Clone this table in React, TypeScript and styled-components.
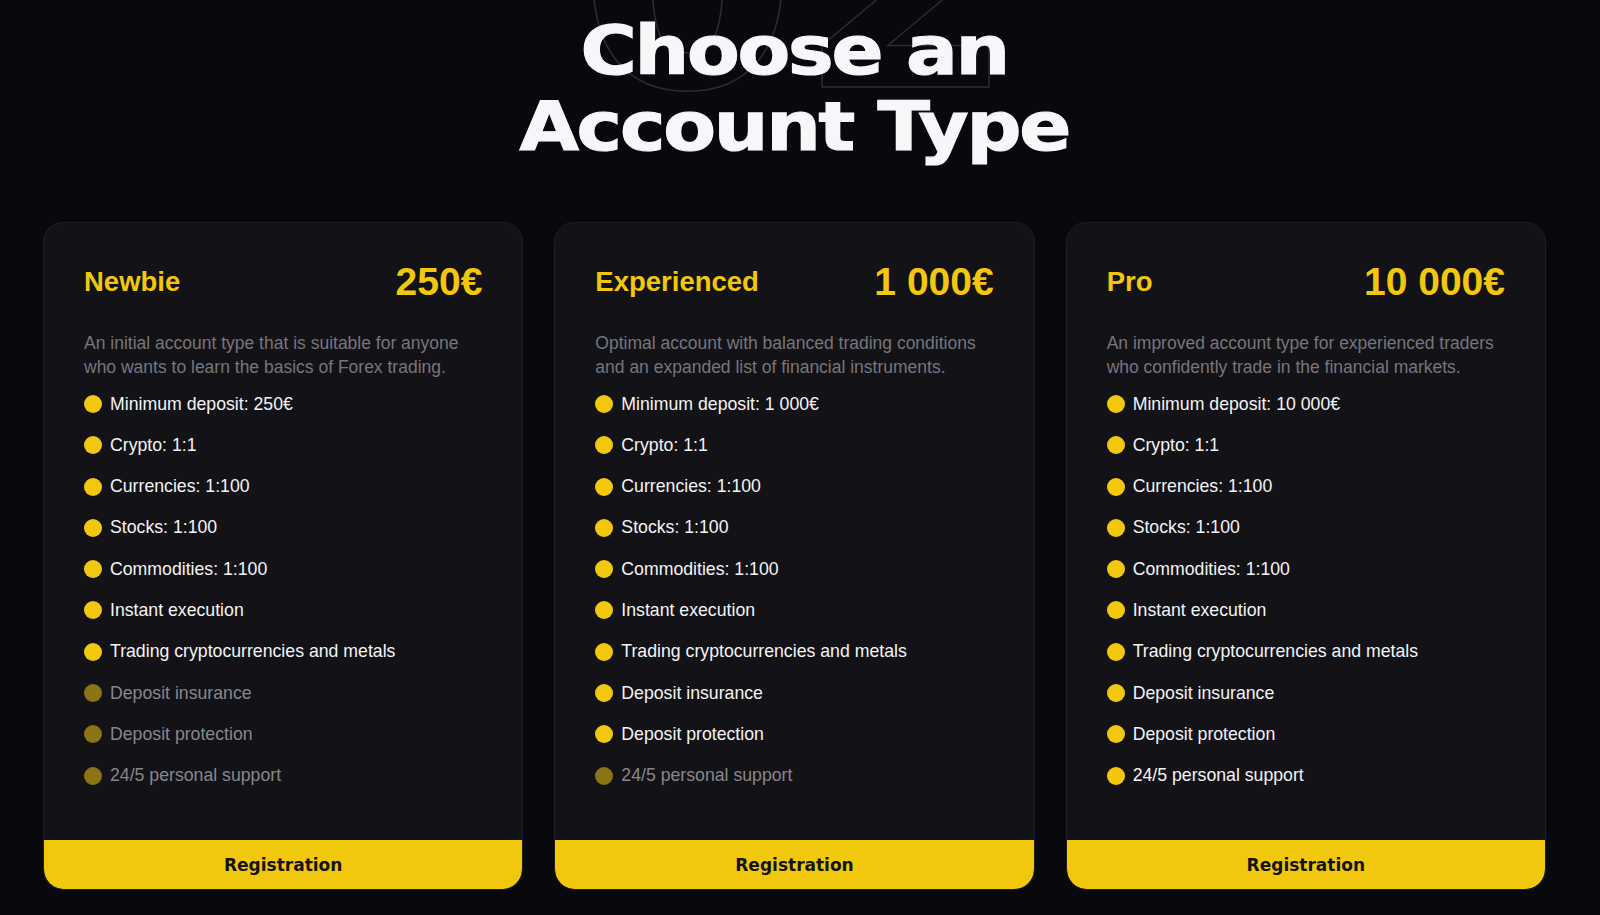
import styled, { createGlobalStyle } from "styled-components";

const GlobalStyle = createGlobalStyle`
    html, body {
        margin: 0;
        padding: 0;
        background: #08090d;
    }
    body {
        font-family: "Liberation Sans", Arial, sans-serif;
        color: #ffffff;
        -webkit-font-smoothing: antialiased;
    }
`;

const Page = styled.main`
    width: 1600px;
    height: 915px;
    overflow: hidden;
    box-sizing: border-box;
    padding: 13px 54px 0 43px;
    background: #08090d;
`;

const Heading = styled.header`
    position: relative;
    display: flex;
    justify-content: center;
    margin-bottom: 57px;
`;

const Watermark = styled.span`
    position: absolute;
    left: 50%;
    top: -179px;
    transform: translateX(-49.5%) scaleX(1.05);
    font-family: "DejaVu Sans", sans-serif;
    font-weight: 700;
    font-size: 300px;
    line-height: 1;
    color: transparent;
    -webkit-text-stroke: 1.5px #2b2c32;
    pointer-events: none;
    user-select: none;
`;

const Title = styled.h1`
    position: relative;
    margin: 0;
    font-family: "DejaVu Sans", sans-serif;
    font-weight: 700;
    font-size: 68px;
    line-height: 76px;
    text-align: center;
    color: #f7f7f9;
    letter-spacing: -2px;
    -webkit-text-stroke: 1.2px #f7f7f9;
    transform: scaleX(1.13);
`;

const Cards = styled.section`
    display: grid;
    grid-template-columns: repeat(3, 1fr);
    gap: 31px;
`;

const Card = styled.article`
    display: flex;
    flex-direction: column;
    min-height: 668px;
    box-sizing: border-box;
    background: #131217;
    border: 1px solid #1e1e24;
    border-radius: 20px;
    overflow: hidden;
`;

const CardBody = styled.div`
    display: flex;
    flex-direction: column;
    padding: 37px 40px 0 40px;
`;

const CardHead = styled.div`
    display: flex;
    justify-content: space-between;
    align-items: center;
    height: 44px;
`;

const PlanName = styled.h2`
    margin: 0;
    font-size: 27.5px;
    font-weight: 700;
    color: #f2c80f;
`;

const Price = styled.span`
    font-size: 39px;
    font-weight: 700;
    color: #f2c80f;
`;

const Description = styled.p`
    margin: 27px 0 0;
    font-size: 17.5px;
    line-height: 24px;
    color: #77767c;
`;

const Features = styled.ul`
    display: flex;
    flex-direction: column;
    gap: 17.3px;
    margin: 13px 0 0;
    padding: 0;
    list-style: none;
`;

const Feature = styled.li<{ $off?: boolean }>`
    display: flex;
    align-items: center;
    gap: 8px;
    height: 24px;
    font-size: 17.7px;
    color: ${(props) => (props.$off ? "#88878d" : "#f4f4f6")};
    &::before {
        content: "";
        flex: none;
        width: 18px;
        height: 18px;
        border-radius: 50%;
        background: ${(props) => (props.$off ? "#8a7416" : "#f2c80f")};
    }
`;

const Register = styled.button`
    margin-top: auto;
    height: 49px;
    border: none;
    border-radius: 0 0 20px 20px;
    background: #f2c80f;
    color: #141414;
    font-family: "DejaVu Sans", sans-serif;
    font-weight: 700;
    font-size: 17px;
    cursor: pointer;
`;

interface IPlan {
    name: string;
    price: string;
    text: string;
    deposit: string;
    enabled: number;
}

const plans: IPlan[] = [
    {
        name: "Newbie",
        price: "250€",
        text: "An initial account type that is suitable for anyone who wants to learn the basics of Forex trading.",
        deposit: "250€",
        enabled: 7,
    },
    {
        name: "Experienced",
        price: "1 000€",
        text: "Optimal account with balanced trading conditions and an expanded list of financial instruments.",
        deposit: "1 000€",
        enabled: 9,
    },
    {
        name: "Pro",
        price: "10 000€",
        text: "An improved account type for experienced traders who confidently trade in the financial markets.",
        deposit: "10 000€",
        enabled: 10,
    },
];

const features = (deposit: string) => [
    `Minimum deposit: ${deposit}`,
    "Crypto: 1:1",
    "Currencies: 1:100",
    "Stocks: 1:100",
    "Commodities: 1:100",
    "Instant execution",
    "Trading cryptocurrencies and metals",
    "Deposit insurance",
    "Deposit protection",
    "24/5 personal support",
];

function PlanCard({ name, price, text, deposit, enabled }: IPlan) {
    return (
        <Card>
            <CardBody>
                <CardHead>
                    <PlanName>{name}</PlanName>
                    <Price>{price}</Price>
                </CardHead>
                <Description>{text}</Description>
                <Features>
                    {features(deposit).map((item, i) => (
                        <Feature key={item} $off={i >= enabled}>
                            {item}
                        </Feature>
                    ))}
                </Features>
            </CardBody>
            <Register>Registration</Register>
        </Card>
    );
}

export default function App() {
    return (
        <>
            <GlobalStyle />
            <Page>
                <Heading>
                    <Watermark aria-hidden>02</Watermark>
                    <Title>
                        Choose an
                        <br />
                        Account Type
                    </Title>
                </Heading>
                <Cards>
                    {plans.map((plan) => (
                        <PlanCard key={plan.name} {...plan} />
                    ))}
                </Cards>
            </Page>
        </>
    );
}
